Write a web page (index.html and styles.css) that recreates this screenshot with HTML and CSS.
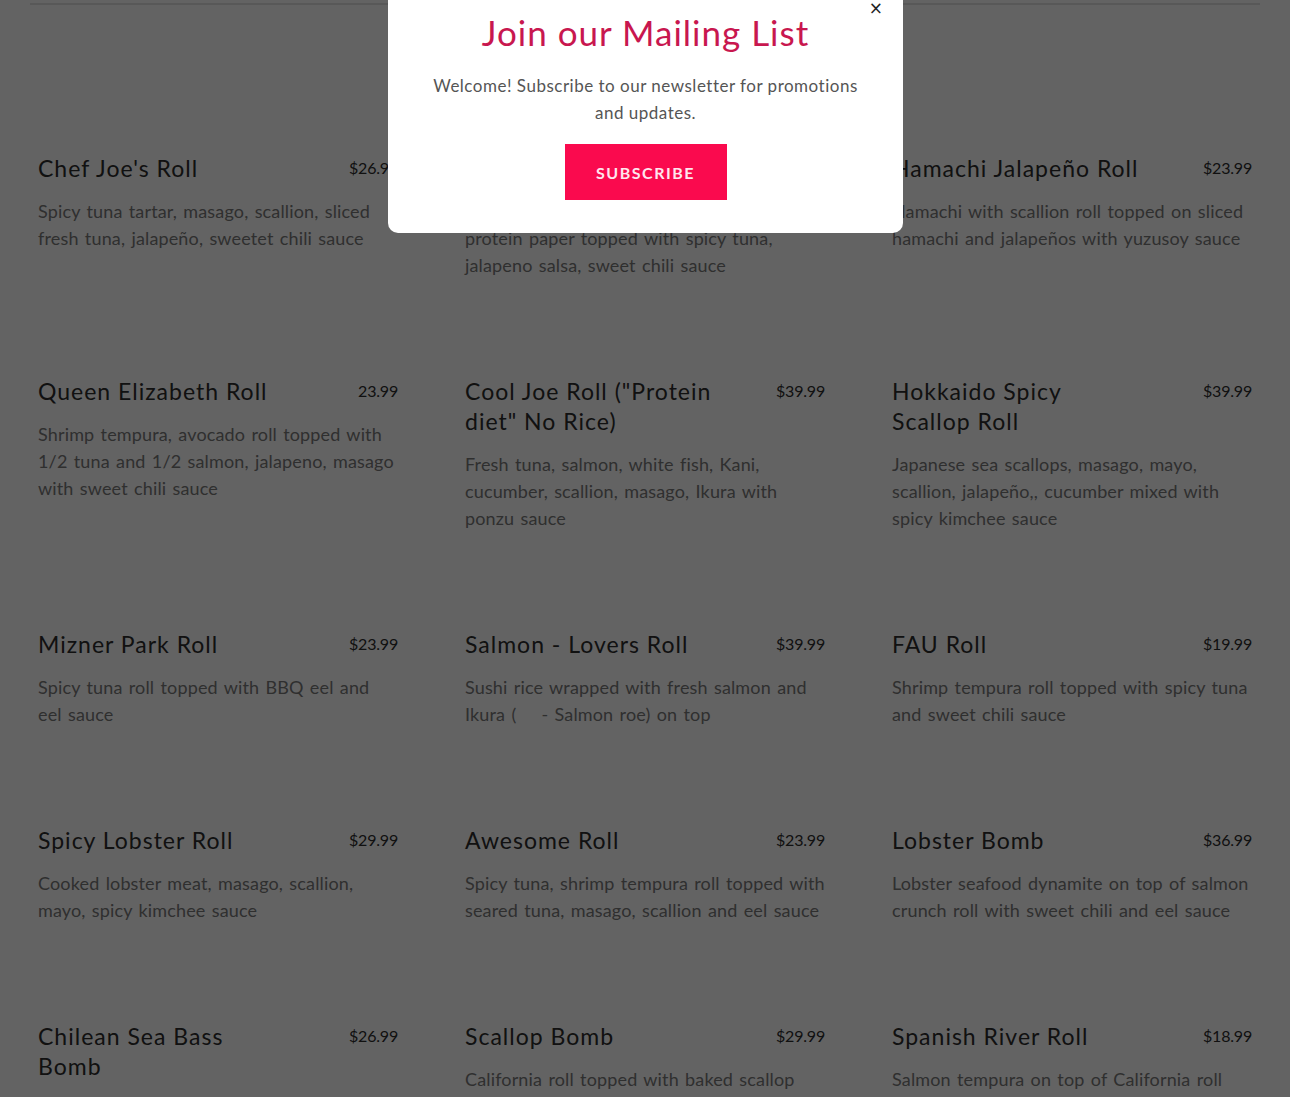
FILE: index.html
```html
<!DOCTYPE html>
<html lang="en">
<head>
<meta charset="utf-8">
<title>Menu</title>
<link rel="stylesheet" href="styles.css">
</head>
<body>
<div class="page">
  <div class="rule"></div>
  <section class="menu">
    <div class="item">
      <div class="head"><h3 class="name">Chef Joe's Roll</h3><span class="price">$26.99</span></div>
      <p class="desc">Spicy tuna tartar, masago, scallion, sliced fresh tuna, jalapeño, sweetet chili sauce</p>
    </div>
    <div class="item">
      <div class="head"><h3 class="name">Protein Roll</h3><span class="price">$26.99</span></div>
      <p class="desc">Salmon, tuna, avocado, kani wrapped in protein paper topped with spicy tuna, jalapeno salsa, sweet chili sauce</p>
    </div>
    <div class="item">
      <div class="head"><h3 class="name">Hamachi Jalapeño Roll</h3><span class="price">$23.99</span></div>
      <p class="desc">Hamachi with scallion roll topped on sliced hamachi and jalapeños with yuzusoy sauce</p>
    </div>

    <div class="item">
      <div class="head"><h3 class="name">Queen Elizabeth Roll</h3><span class="price">23.99</span></div>
      <p class="desc">Shrimp tempura, avocado roll topped with 1/2 tuna and 1/2 salmon, jalapeno, masago with sweet chili sauce</p>
    </div>
    <div class="item">
      <div class="head"><h3 class="name">Cool Joe Roll ("Protein diet" No Rice)</h3><span class="price">$39.99</span></div>
      <p class="desc">Fresh tuna, salmon, white fish, Kani, cucumber, scallion, masago, Ikura with ponzu sauce</p>
    </div>
    <div class="item">
      <div class="head"><h3 class="name">Hokkaido Spicy Scallop Roll</h3><span class="price">$39.99</span></div>
      <p class="desc">Japanese sea scallops, masago, mayo, scallion, jalapeño,, cucumber mixed with spicy kimchee sauce</p>
    </div>

    <div class="item">
      <div class="head"><h3 class="name">Mizner Park Roll</h3><span class="price">$23.99</span></div>
      <p class="desc">Spicy tuna roll topped with BBQ eel and eel sauce</p>
    </div>
    <div class="item">
      <div class="head"><h3 class="name">Salmon - Lovers Roll</h3><span class="price">$39.99</span></div>
      <p class="desc">Sushi rice wrapped with fresh salmon and Ikura (&nbsp;&nbsp;&nbsp; - Salmon roe) on top</p>
    </div>
    <div class="item">
      <div class="head"><h3 class="name">FAU Roll</h3><span class="price">$19.99</span></div>
      <p class="desc">Shrimp tempura roll topped with spicy tuna and sweet chili sauce</p>
    </div>

    <div class="item">
      <div class="head"><h3 class="name">Spicy Lobster Roll</h3><span class="price">$29.99</span></div>
      <p class="desc">Cooked lobster meat, masago, scallion, mayo, spicy kimchee sauce</p>
    </div>
    <div class="item">
      <div class="head"><h3 class="name">Awesome Roll</h3><span class="price">$23.99</span></div>
      <p class="desc">Spicy tuna, shrimp tempura roll topped with seared tuna, masago, scallion and eel sauce</p>
    </div>
    <div class="item">
      <div class="head"><h3 class="name">Lobster Bomb</h3><span class="price">$36.99</span></div>
      <p class="desc">Lobster seafood dynamite on top of salmon crunch roll with sweet chili and eel sauce</p>
    </div>

    <div class="item">
      <div class="head"><h3 class="name">Chilean Sea Bass Bomb</h3><span class="price">$26.99</span></div>
      <p class="desc">Baked chilean sea bass with masago, scallion on top of California roll</p>
    </div>
    <div class="item">
      <div class="head"><h3 class="name">Scallop Bomb</h3><span class="price">$29.99</span></div>
      <p class="desc">California roll topped with baked scallop dynamite and eel sauce</p>
    </div>
    <div class="item">
      <div class="head"><h3 class="name">Spanish River Roll</h3><span class="price">$18.99</span></div>
      <p class="desc">Salmon tempura on top of California roll with spicy mayo and eel sauce</p>
    </div>
  </section>
</div>

<div class="overlay"></div>

<div class="modal">
  <button class="close" aria-label="Close">&times;</button>
  <h2 class="modal-title">Join our Mailing List</h2>
  <p class="modal-text">Welcome! Subscribe to our newsletter for promotions and updates.</p>
  <button class="subscribe">SUBSCRIBE</button>
</div>
</body>
</html>
```

FILE: styles.css
```css
* { box-sizing: border-box; }

html, body {
  margin: 0;
  padding: 0;
  background: #ffffff;
  font-family: Lato, "Noto Sans", "Noto Sans CJK JP", sans-serif;
  overflow: hidden;
  height: 1097px;
}

.page {
  width: 1230px;
  margin: 0 auto;
}

.rule {
  height: 5px;
  border-bottom: 2px solid #e2e2e2;
}

.menu {
  display: grid;
  grid-template-columns: repeat(3, 360px);
  column-gap: 67px;
  row-gap: 97px;
  align-items: start;
  padding: 148px 8px 0 8px;
}

.head {
  display: flex;
  justify-content: space-between;
  align-items: flex-start;
}

.name {
  margin: 0;
  flex: 0 1 250px;
  font-size: 23px;
  line-height: 30px;
  font-weight: 400;
  letter-spacing: 1px;
  color: #2c2c2c;
}

.price {
  font-size: 16px;
  line-height: 30px;
  color: #2c2c2c;
  letter-spacing: -0.2px;
  white-space: nowrap;
}

.desc {
  margin: 15px 0 0 0;
  font-size: 18px;
  line-height: 27px;
  color: #7a7a7a;
  letter-spacing: 0.15px;
  word-spacing: 1.5px;
}

.overlay {
  position: fixed;
  inset: 0;
  background: rgba(0, 0, 0, 0.61);
}

.modal {
  position: fixed;
  top: -20px;
  left: 388px;
  width: 515px;
  height: 253px;
  background: #ffffff;
  border-radius: 10px;
  padding: 28px 40px 0 40px;
  text-align: center;
}

.close {
  position: absolute;
  top: 18px;
  right: 20px;
  border: 0;
  background: none;
  padding: 0;
  font-family: "DejaVu Sans", sans-serif;
  font-size: 17px;
  line-height: 20px;
  color: #222;
  cursor: pointer;
}

.modal-title {
  margin: 0;
  font-size: 35px;
  line-height: 48px;
  font-weight: 400;
  letter-spacing: 1px;
  color: #c8174f;
}

.modal-text {
  margin: 16px 0 0 0;
  font-size: 17px;
  line-height: 27px;
  color: #555555;
  letter-spacing: 0.5px;
}

.subscribe {
  display: block;
  margin: 18px auto 0 auto;
  width: 162px;
  height: 56px;
  border: 0;
  background: #fa0a4e;
  color: #ffe6ee;
  font-family: Lato, sans-serif;
  font-size: 16px;
  font-weight: 700;
  letter-spacing: 1.5px;
  cursor: pointer;
}
```
